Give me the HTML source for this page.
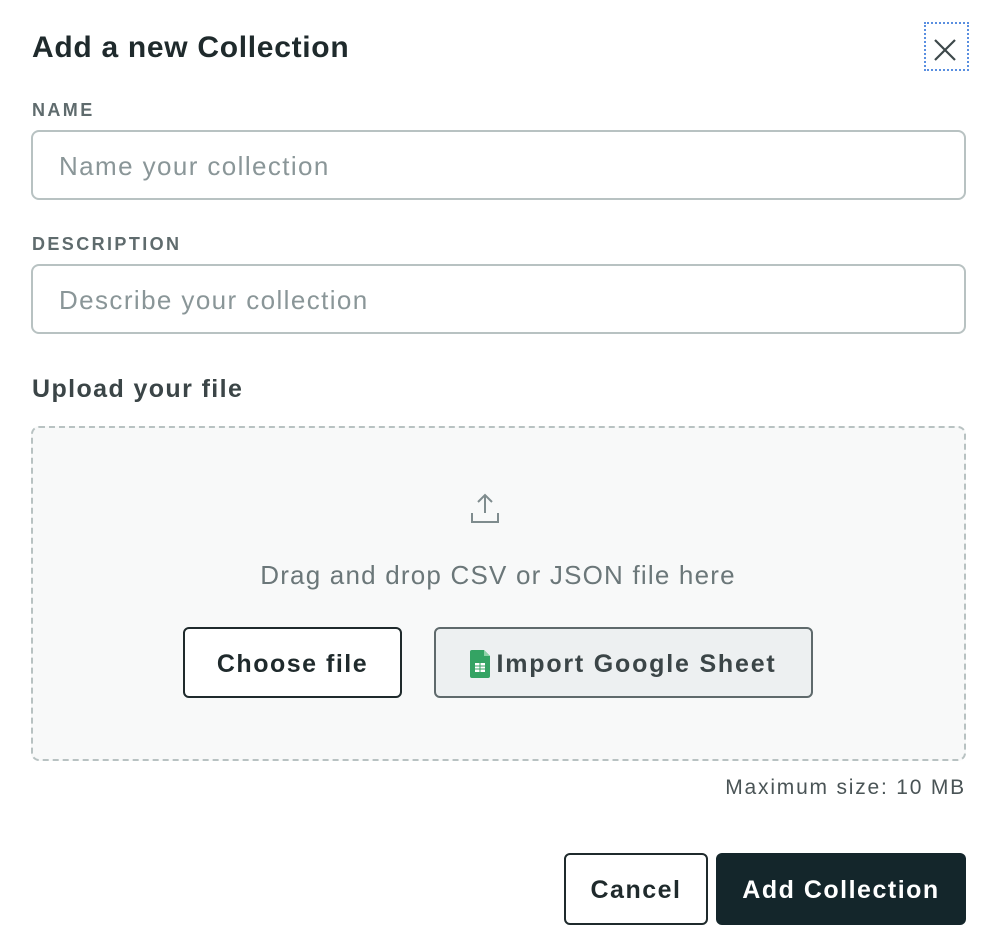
<!DOCTYPE html>
<html><head><meta charset="utf-8"><style>
*{box-sizing:border-box;margin:0;padding:0}
body{width:996px;height:948px;background:#fff;font-family:"Liberation Sans",sans-serif;position:relative;overflow:hidden}
.a{position:absolute;white-space:nowrap}
.title{left:32px;top:30px;font-size:30px;font-weight:bold;color:#1f2a2c;line-height:36px;letter-spacing:0.7px}
.lbl{left:32px;font-size:18px;font-weight:bold;color:#5f6b6d;letter-spacing:2.4px;line-height:22px}
.inp{left:31px;width:935px;height:70px;border:2px solid #b8c2c2;border-radius:8px;background:#fff}
.ph{left:59px;font-size:26px;color:#8a9698;line-height:30px;letter-spacing:1.4px}
.btn{display:flex;align-items:center;justify-content:center;font-size:25px;font-weight:bold;border-radius:6px;letter-spacing:1.5px}
</style></head><body>
<div class="a title">Add a new Collection</div>
<div class="a" style="left:924px;top:22px;width:45px;height:49px;border:2px dotted #5a8fe0"></div>
<svg class="a" style="left:933px;top:38px" width="24" height="24" viewBox="0 0 24 24"><path d="M2 2L22 22M22 2L2 22" stroke="#3d484a" stroke-width="2.2" fill="none"/></svg>
<div class="a lbl" style="top:99px">NAME</div>
<div class="a inp" style="top:130px"></div>
<div class="a ph" style="top:151px">Name your collection</div>
<div class="a lbl" style="top:233px">DESCRIPTION</div>
<div class="a inp" style="top:264px"></div>
<div class="a ph" style="top:285px">Describe your collection</div>
<div class="a" style="left:32px;top:374px;font-size:25px;font-weight:bold;color:#3b4547;line-height:30px;letter-spacing:1.4px">Upload your file</div>
<div class="a" style="left:31px;top:426px;width:935px;height:335px;border:2px dashed #b8c2c2;border-radius:8px;background:#f8f9f9"></div>
<svg class="a" style="left:470px;top:493px" width="32" height="32" viewBox="0 0 32 32"><path d="M15 2V20M8 9L15 2L22 9M2 20V29H28V20" stroke="#7f8c8e" stroke-width="2" fill="none"/></svg>
<div class="a" style="left:0;width:996px;text-align:center;top:560px;font-size:26px;color:#6b7779;line-height:30px;letter-spacing:1.2px">Drag and drop CSV or JSON file here</div>
<div class="a btn" style="left:183px;top:627px;width:219px;height:71px;border:2px solid #1f2a2c;background:#fff;color:#1f2a2c;padding-top:3px">Choose file</div>
<div class="a btn" style="left:434px;top:627px;width:379px;height:71px;border:2px solid #5f6a6c;background:#edf0f1;color:#3b4547;padding-top:3px;letter-spacing:1.8px">
<svg width="20" height="28" viewBox="0 0 20 28" style="margin-right:6px"><path d="M2 0H14L20 6V26Q20 28 18 28H2Q0 28 0 26V2Q0 0 2 0Z" fill="#34a363"/><path d="M14 0V6H20Z" fill="#8ed1a6"/><rect x="5" y="13" width="10" height="9" fill="#fff"/><path d="M5 16H15M5 19H15M10 13V22" stroke="#34a363" stroke-width="1"/></svg>Import Google Sheet</div>
<div class="a" style="right:30px;top:776px;font-size:21px;color:#4a5456;line-height:24px;letter-spacing:1.8px">Maximum size: 10 MB</div>
<div class="a btn" style="left:564px;top:853px;width:144px;height:72px;border:2px solid #1f2a2c;background:#fff;color:#1f2a2c;padding-top:3px">Cancel</div>
<div class="a btn" style="left:716px;top:853px;width:250px;height:72px;background:#14262b;color:#fff;padding-top:3px">Add Collection</div>
</body></html>
